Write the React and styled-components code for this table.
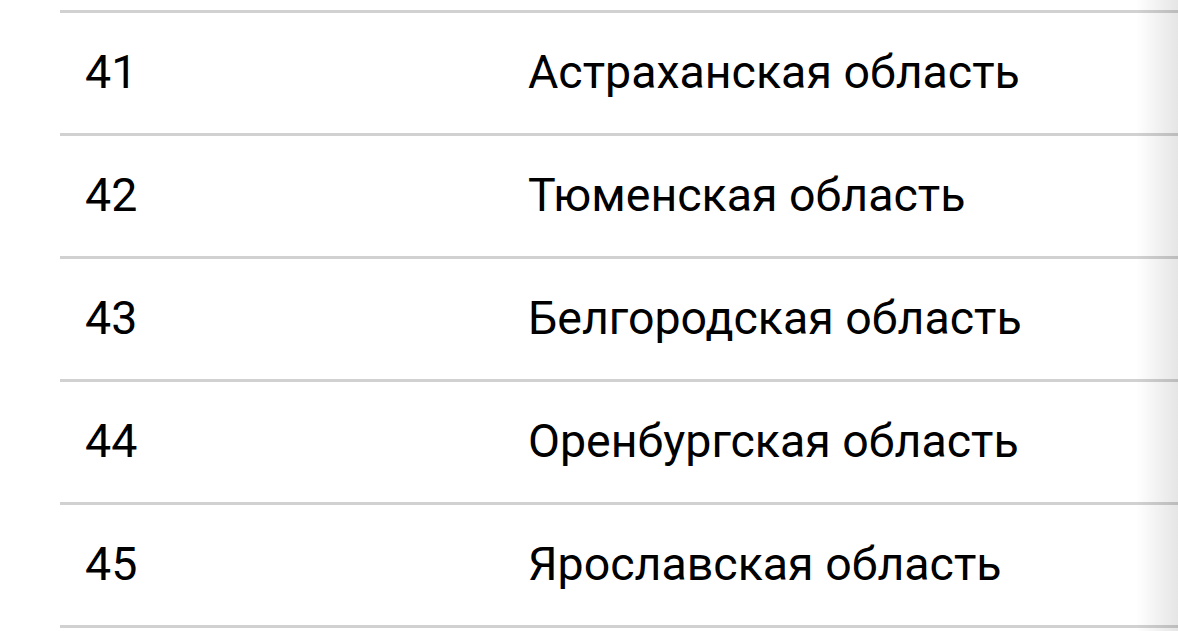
import React from "react";
import styled, { createGlobalStyle } from "styled-components";

const Global = createGlobalStyle`
  html, body { margin: 0; padding: 0; background: #fff; }
  body { font-family: Roboto, "Noto Sans", sans-serif; overflow: hidden; }
`;

const Viewport = styled.div`
  position: relative;
  width: 1178px;
  height: 631px;
  overflow: hidden;
  background: #fff;
`;

const Table = styled.div`
  margin: 10px 0 0 60px;
  display: flex;
  flex-direction: column;
  border-bottom: 3px solid #d1d1d1;
`;

const Row = styled.div`
  display: grid;
  grid-template-columns: 443px 1fr;
  height: 120px;
  border-top: 3px solid #d1d1d1;
`;

const Cell = styled.div`
  padding: 0 25px;
  font-size: 46.5px;
  line-height: 118px;
  color: #000;
  white-space: nowrap;
`;

const EdgeShade = styled.div`
  position: absolute;
  top: 0;
  right: 0;
  width: 42px;
  height: 100%;
  background: linear-gradient(to right, rgba(0,0,0,0), rgba(0,0,0,0.1));
  pointer-events: none;
`;

const rows = [
  ["41", "Астраханская область"],
  ["42", "Тюменская область"],
  ["43", "Белгородская область"],
  ["44", "Оренбургская область"],
  ["45", "Ярославская область"],
];

export default function App() {
  return (
    <Viewport>
      <Global />
      <Table>
        {rows.map(([n, name]) => (
          <Row key={n}>
            <Cell>{n}</Cell>
            <Cell>{name}</Cell>
          </Row>
        ))}
      </Table>
      <EdgeShade />
    </Viewport>
  );
}
